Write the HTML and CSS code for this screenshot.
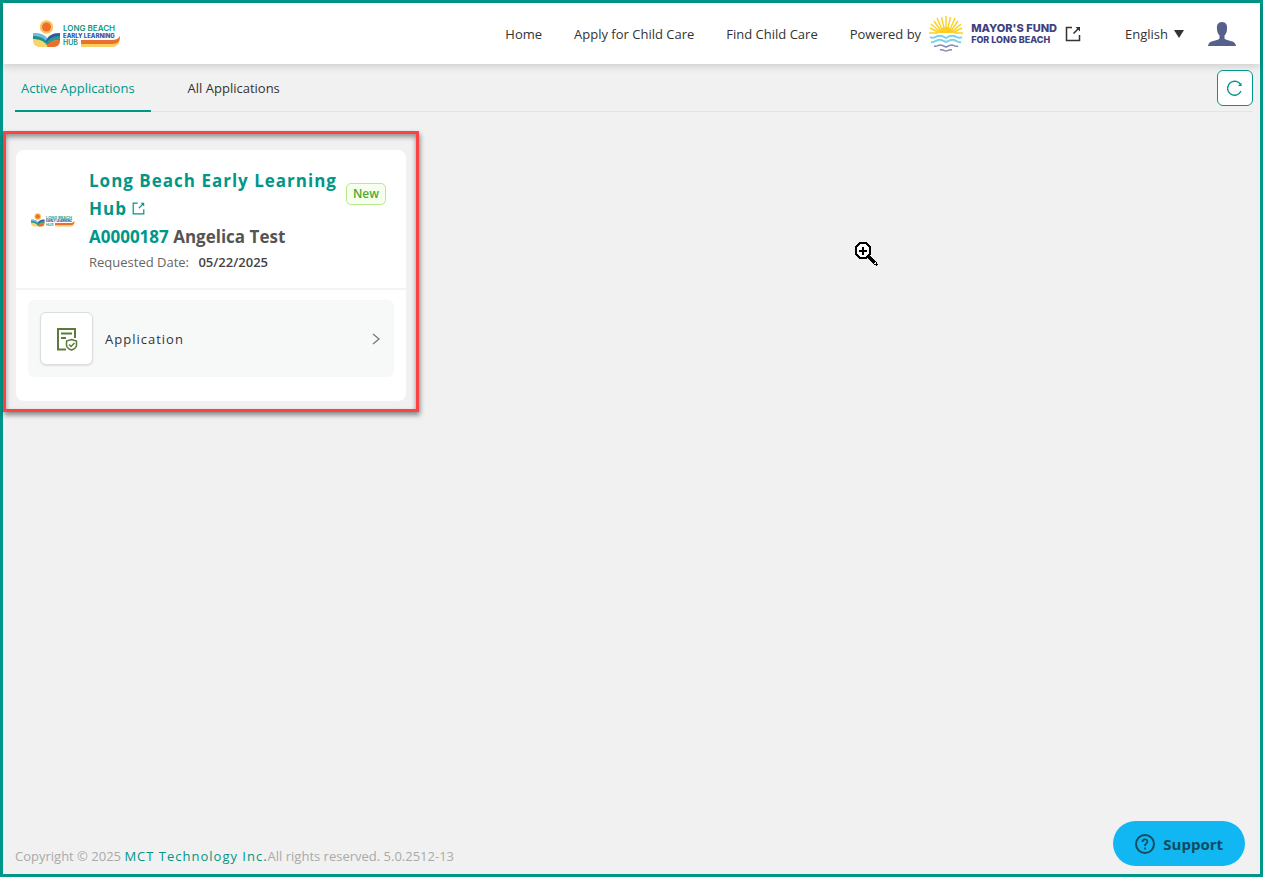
FILE: index.html
```html
<!DOCTYPE html>
<html lang="en">
  <head>
    <meta charset="UTF-8" />
    <meta name="viewport" content="width=device-width, initial-scale=1.0" />
    <title>Active Applications</title>
    <link rel="stylesheet" href="styles.css">
  </head>
  <body>
    <svg class="sprite" aria-hidden="true">
      <symbol id="hub-mark" viewBox="0 0 90 28">
        <circle cx="14.5" cy="7" r="6.7" fill="#fbc55a"/>
        <circle cx="14.5" cy="7" r="4.5" fill="#ed6f2d"/>
        <path d="M1 13c6 0 11 1 14 5 3-4 7-5 13-5v7c0 5-3 7-7 7H8c-4 0-7-2-7-7z" fill="#f8d46c"/>
        <path d="M1 13c6 0 11 1 14 5v5c-3-4-8-6-14-6z" fill="#75b8e4"/>
        <path d="M1 16c6 0 11 2 14 6v3c-3-4-8-6-14-6z" fill="#14977f"/>
        <path d="M14 21c2-5 6-8 14-8v4c-7 0-11 3-13 8z" fill="#2a5bb0"/>
        <path d="M14 23c3-4 7-7 14-7v4c-7 0-9 2-12 6z" fill="#2f9d83"/>
        <path d="M15 27c1-5 6-7 13-7 0 5-3 7-7 7z" fill="#ed6f2d"/>
        <path d="M49 20h31c4 0 6-1 8-4 0 7-2 11-8 11H49z" fill="#f8cd62"/>
        <path d="M49 20h31c4 0 6-1 8-4 0 5-2 8-8 8H49z" fill="#ed6f2d"/>
      </symbol>
      <symbol id="external" viewBox="0 0 16 16">
        <path d="M7 1.5H1.500v13h13V9M8.500 7.500l5-5" fill="none" stroke="currentColor" stroke-width="1.5"/>
        <path d="M10.500 1H15v4.500z" fill="currentColor"/>
      </symbol>
    </svg>

    <div id="root">
      <header class="header">
        <a href="#" class="brand" aria-label="Long Beach Early Learning Hub">
          <svg class="brand-logo" viewBox="0 0 90 28">
            <use href="#hub-mark"/>
            <text x="31" y="11" class="logo-text">LONG BEACH</text>
            <text x="31" y="18" class="logo-text logo-text-bold">EARLY LEARNING</text>
            <text x="31" y="25" class="logo-text logo-text-hub">HUB</text>
          </svg>
        </a>
        <nav class="nav">
          <a href="#">Home</a>
          <a href="#">Apply for Child Care</a>
          <a href="#">Find Child Care</a>
          <a href="#" class="powered">
            Powered by
            <svg class="fund-logo" viewBox="0 0 34 36" fill="none">
              <path d="M9 17c1-4 4-6 8-6s7 2 8 6z" fill="#fdd023"/>
              <path d="M9 17H0M9 16L1 12M10 15L2 8M11 13.500L5 5M12.500 12.500L8 2M15 12L12.500 1M17 12V0M19 12L21.500 1M21.500 12.500L26 2M23 13.500L29 5M24 15L32 8M25 16L33 12M25 17h9" stroke="#fdd023" stroke-width="1.4"/>
              <path d="M1 21c3 2 5 0 8-1s5 0 8 2c3-2 5-3 8-2s5 3 8 1M2 26c3 1 4-1 7-2s5 1 8 2c3-1 5-3 8-2s4 3 7 2" stroke="#7dd3ea" stroke-width="2"/>
              <path d="M5 30c3 1 4-1 6-1s4 1 6 2c2-1 4-2 6-2s3 2 6 1M11 34c3-1 4 1 6 1s3-2 6-1" stroke="#8289b5" stroke-width="1.6"/>
            </svg>
            <span class="fund-name"><span>MAYOR'S FUND</span><span class="fund-place">FOR LONG BEACH</span></span>
            <svg class="powered-icon"><use href="#external"/></svg>
          </a>
        </nav>
        <button type="button" class="language">English
          <svg viewBox="0 0 10 8"><path d="M0 0h10L5 8z" fill="currentColor"/></svg>
        </button>
        <button type="button" class="user" aria-label="Account">
          <svg viewBox="0 0 28 24"><path d="M14 0c4 0 5.500 3 5 7 0 3-1 5-2.500 6.500v3c1 2 9.500 2 10.500 5 .5 1 1 1.500 1 2.500H0c0-1 .5-1.500 1-2.500 1-3 9.500-3 10.500-5v-3C10 12 9 10 9 7c-.5-4 1-7 5-7z" fill="#55618a"/></svg>
        </button>
      </header>

      <main class="content">
        <div class="toolbar">
          <a href="#" class="tab active">Active Applications</a>
          <a href="#" class="tab">All Applications</a>
          <button type="button" class="refresh" aria-label="Refresh">
            <svg viewBox="0 0 16 16" fill="none" stroke="currentColor"><path d="M14 5.500A7 7 0 1 0 14 11" stroke-width="1.3"/><path d="M14.500 2.500v3.500H11z" fill="currentColor" stroke="none"/></svg>
          </button>
        </div>

        <div class="highlight">
          <section class="card">
            <div class="card-head">
              <svg class="card-logo" viewBox="0 0 90 28">
                <use href="#hub-mark"/>
                <text x="31" y="11" class="logo-text">LONG BEACH</text>
                <text x="31" y="18" class="logo-text logo-text-bold">EARLY LEARNING</text>
                <text x="31" y="25" class="logo-text logo-text-hub">HUB</text>
              </svg>
              <div class="card-info">
                <h2><a href="#">Long Beach Early Learning Hub <svg class="title-icon"><use href="#external"/></svg></a></h2>
                <p class="applicant"><a href="#">A0000187</a> Angelica Test</p>
                <p class="requested">Requested Date: <strong>05/22/2025</strong></p>
              </div>
              <span class="badge">New</span>
            </div>
            <div class="card-body">
              <a href="#" class="item">
                <span class="item-icon">
                  <svg viewBox="0 0 22 24" fill="none" stroke="#5d7a3a" stroke-width="2">
                    <path d="M10 22.500H2V2h17v9M5 6.500h11M5 11h5"/>
                    <path d="M15.500 12.500l5 1.500v4c0 2-2 4-5 5-3-1-5-3-5-5v-4z" stroke-width="1.500"/>
                    <path d="M13 17.500l2 2 3.500-3.500" stroke-width="1.500"/>
                  </svg>
                </span>
                <span class="item-label">Application</span>
                <svg class="chevron" viewBox="0 0 8 12"><path d="M1 1l6 5-6 5" fill="none" stroke="currentColor" stroke-width="1.3"/></svg>
              </a>
            </div>
          </section>
        </div>
      </main>

      <footer class="footer">
        <p>Copyright © 2025 <a href="#">MCT Technology Inc.</a>All rights reserved. 5.0.2512-13</p>
        <button type="button" class="support">
          <svg viewBox="0 0 20 20" fill="none" stroke="currentColor" stroke-width="2"><circle cx="10" cy="10" r="9"/><path d="M7.500 8c0-3.500 5-3.500 5-.5 0 2-2.500 2-2.500 4.500M10 13.500v2" stroke-width="1.700"/></svg>
          Support
        </button>
      </footer>

      <svg class="zoom-cursor" viewBox="0 0 24 24" shape-rendering="crispEdges" aria-hidden="true">
        <path d="M6 1h6l4 4v7l-4 4H6l-4-4V5z" fill="#fff" stroke="#000" stroke-width="1.500"/>
        <path d="M5 8h8v2H5zM8 5h2v8H8z"/>
        <path d="M15 15l6 6" stroke="#000" stroke-width="3"/>
        <path d="M20 22h4M22 20v4" stroke="#000"/>
      </svg>
    </div>
  </body>
</html>
```
FILE: styles.css
```css
:root {
  --main-color: #009688;
  --text-color: #333;
  font-family: "Open Sans", "Noto Sans", sans-serif;
  font-size: 13px;
  line-height: 20px;
  color: var(--text-color);
}

* {
  box-sizing: border-box;
}

body,
h2,
p {
  margin: 0;
}

a {
  color: inherit;
  text-decoration: none;
}

button {
  padding: 0;
  border: none;
  background: none;
  color: inherit;
  font: inherit;
  cursor: pointer;
}

svg {
  flex-shrink: 0;
}

.sprite {
  position: absolute;
  width: 0;
  height: 0;
}

.logo-text {
  fill: #17957f;
  font-family: Inter, sans-serif;
  font-size: 8px;
  font-weight: 600;
}

.logo-text-bold {
  fill: #2a56a8;
  font-size: 6px;
  font-weight: 800;
}

.logo-text-hub {
  font-size: 7px;
}

#root {
  position: relative;
  display: flex;
  flex-direction: column;
  min-height: 100vh;
  border: 3px solid var(--main-color);
  background: #f1f1f1;
}

/* header */
.header {
  display: flex;
  align-items: center;
  height: 61px;
  padding: 0 24px 0 29px;
  background: #fff;
  box-shadow: 0 2px 8px rgba(0, 0, 0, 0.16);
}

.brand-logo {
  display: block;
  width: 90px;
  height: 28px;
}

.nav {
  display: flex;
  align-items: center;
  gap: 32px;
  margin-left: auto;
}

.powered {
  display: flex;
  align-items: center;
}

.fund-logo {
  width: 34px;
  height: 36px;
  margin: 0 8px;
}

.fund-name {
  display: flex;
  flex-direction: column;
  color: #3d427f;
  font-family: Inter, sans-serif;
  font-size: 11px;
  font-weight: 800;
  line-height: 11px;
}

.fund-place {
  font-size: 9px;
}

.powered-icon {
  width: 16px;
  height: 16px;
  margin-left: 8px;
}

.language {
  display: flex;
  align-items: center;
  gap: 6px;
  margin: 0 24px 0 44px;
}

.language svg {
  width: 10px;
  height: 8px;
}

.user svg {
  display: block;
  width: 28px;
  height: 24px;
}

/* tabs */
.content {
  flex: 1;
}

.toolbar {
  display: flex;
  gap: 31px;
  height: 48px;
  margin: 0 7px 0 12px;
  box-shadow: inset 0 -1px #e4e4e4;
}

.tab {
  padding: 14px 16px 0 6px;
}

.tab.active {
  border-bottom: 2px solid var(--main-color);
  color: var(--main-color);
}

.refresh {
  display: flex;
  align-items: center;
  justify-content: center;
  width: 36px;
  height: 36px;
  margin: 6px 0 0 auto;
  border: 1px solid var(--main-color);
  border-radius: 6px;
  background: #fff;
  color: var(--main-color);
}

.refresh svg {
  width: 16px;
  height: 16px;
}

/* application card */
.highlight {
  width: 416px;
  max-width: 100%;
  margin-top: 19px;
  padding: 16px 10px 8px;
  border: 3px solid #fc4343;
  box-shadow: 1px 3px 5px rgba(0, 0, 0, 0.45), inset 0 3px 5px rgba(0, 0, 0, 0.4);
}

.card {
  border-radius: 8px;
  background: #fff;
}

.card-head {
  display: flex;
  align-items: flex-start;
  padding: 17px 20px 15px 14px;
  border-bottom: 2px solid #f4f4f4;
}

.card-logo {
  align-self: center;
  width: 46px;
  height: 14px;
}

.card-info {
  flex: 1;
  margin-left: 13px;
}

.card h2 {
  color: var(--main-color);
  font-size: 17px;
  font-weight: 700;
  letter-spacing: 1px;
  line-height: 28px;
}

.title-icon {
  width: 13px;
  height: 13px;
}

.applicant {
  color: #555;
  font-size: 17px;
  font-weight: 700;
  line-height: 28px;
}

.applicant a {
  color: var(--main-color);
}

.requested {
  color: #666;
  line-height: 22px;
}

.requested strong {
  margin-left: 6px;
  color: #444;
  font-weight: 600;
}

.badge {
  margin-top: 16px;
  padding: 0 6px;
  border: 1px solid #b7eb8f;
  border-radius: 5px;
  background: #f6ffed;
  color: #52a72f;
  font-size: 12px;
  font-weight: 600;
}

.card-body {
  padding: 10px 12px 24px;
}

.item {
  display: flex;
  align-items: center;
  padding: 12px 14px 12px 12px;
  border-radius: 6px;
  background: #f7f9f9;
}

.item-icon {
  display: flex;
  align-items: center;
  justify-content: center;
  width: 53px;
  height: 53px;
  border: 1px solid #ddd;
  border-radius: 6px;
  background: #fff;
  box-shadow: 0 1px 2px rgba(0, 0, 0, 0.1);
}

.item-icon svg {
  width: 22px;
  height: 24px;
}

.item-label {
  flex: 1;
  margin-left: 12px;
  letter-spacing: 1px;
}

.chevron {
  width: 8px;
  height: 12px;
  color: #777;
}

/* footer */
.footer {
  display: flex;
  align-items: center;
  justify-content: space-between;
  padding: 0 15px 8px 12px;
  color: #aaa;
}

.footer p {
  align-self: flex-end;
}

.footer a {
  color: var(--main-color);
  letter-spacing: 1px;
}

.support {
  display: flex;
  align-items: center;
  gap: 8px;
  height: 45px;
  padding: 0 22px;
  border-radius: 23px;
  background: #10b7f2;
  color: #144b5e;
  font-size: 15px;
  font-weight: 700;
}

.support svg {
  width: 20px;
  height: 20px;
}

.zoom-cursor {
  position: absolute;
  top: 239px;
  left: 851px;
  width: 24px;
  height: 24px;
}
```
